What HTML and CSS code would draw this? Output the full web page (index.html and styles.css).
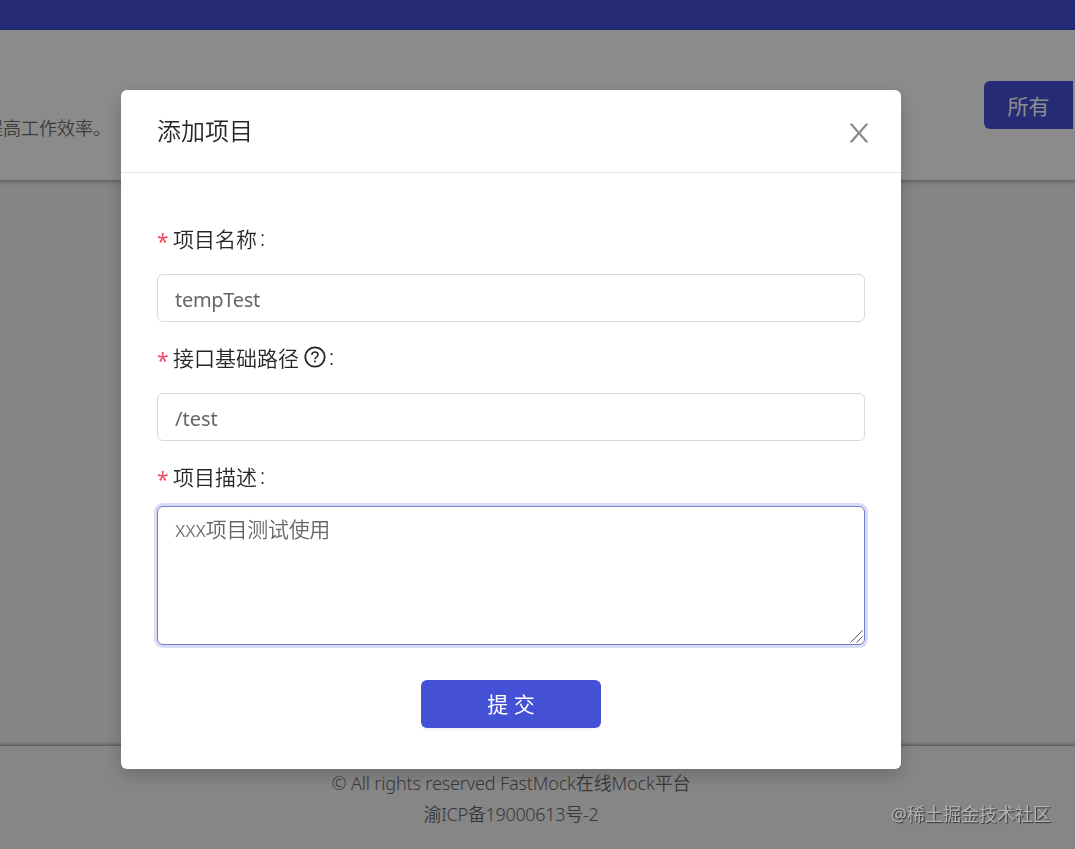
FILE: index.html
```html
<!DOCTYPE html>
<html lang="zh-CN">
<head>
  <meta charset="UTF-8">
  <title>FastMock在线Mock平台</title>
  <link rel="stylesheet" href="styles.css">
</head>
<body>

<div class="page">
  <header class="navbar"></header>

  <section class="banner">
    <p class="slogan">提高工作效率。</p>
    <button class="btn filter-btn">所有</button>
  </section>

  <main class="content"></main>

  <footer class="footer">
    <p><span class="copyright">© All rights reserved FastMock在线Mock平台</span></p>
    <p><span class="icp">渝ICP备19000613号-2</span></p>
  </footer>
</div>

<!-- Add project dialog -->
<div class="mask">
  <div class="modal">
    <div class="modal-header">
      <h2>添加项目</h2>
      <svg class="close" width="20" height="20" viewBox="0 0 20 20">
        <path d="M1 1H3.2L10 8.9L16.8 1H19L11.1 10L19 19H16.8L10 11.2L3.2 19H1L8.9 10Z" fill="currentColor" stroke="currentColor" stroke-width="0.7"/>
      </svg>
    </div>
    <form class="modal-body">
      <label class="label" for="name"><span class="required">*</span>项目名称<span class="colon">:</span></label>
      <input class="control" id="name" type="text" value="tempTest">

      <label class="label" for="path"><span class="required">*</span>接口基础路径
        <svg class="help" width="22" height="22" viewBox="0 0 22 22" fill="none" stroke="currentColor">
          <circle cx="11" cy="11" r="9.7" stroke-width="1.8"/>
          <path d="M7.9 8.9C7.9 7 9.2 5.9 11 5.9S14.1 7.1 14.1 8.7C14.1 10.8 11 10.9 11 13.2" stroke-width="1.5"/>
          <circle cx="11" cy="15.6" r="1" fill="currentColor" stroke="none"/>
        </svg><span class="colon">:</span></label>
      <input class="control" id="path" type="text" value="/test">

      <label class="label label-desc" for="desc"><span class="required">*</span>项目描述<span class="colon">:</span></label>
      <div class="textarea-wrap">
        <textarea class="control focused" id="desc">xxx项目测试使用</textarea>
        <svg class="resizer" width="13" height="13" viewBox="0 0 13 13">
          <path d="M0.5 12.5L12.5 0.5M6.5 12.5L12.5 6.5" stroke="#555" fill="none"/>
        </svg>
      </div>

      <button class="btn submit-btn" type="button">提 交</button>
    </form>
  </div>
</div>

<div class="watermark">@稀土掘金技术社区</div>

</body>
</html>
```
FILE: styles.css
```css
* {
  box-sizing: border-box;
}
body {
  margin: 0;
  font-family: "Noto Sans", "Noto Sans CJK SC", sans-serif;
  font-weight: 350;
  font-size: 21px;
  color: #262626;
  overflow: hidden;
}
h2, p {
  margin: 0;
  font-weight: 350;
}
.page {
  display: flex;
  flex-direction: column;
  height: 849px;
  background: #f2f2f2;
}
.navbar {
  height: 30px;
  background: #4450d6;
}
.banner {
  display: flex;
  justify-content: space-between;
  height: 150px;
  margin: 0 -10px 1px;
  padding: 51px 12px 0 10px;
  background: #fdfdfd;
  box-shadow: 0 1px 5px rgba(0, 0, 0, 0.4);
}
.slogan {
  margin: 34px 0 0 -15px;
  font-size: 18px;
  line-height: 26px;
  color: #707070;
}
.btn {
  border: none;
  background: #4450d6;
  color: #fff;
  font-family: inherit;
  font-weight: 400;
  font-size: 21px;
  line-height: 48px;
  height: 48px;
  padding: 0;
}
.filter-btn {
  width: 89px;
  padding-top: 1px;
  border-radius: 6px 0 0 6px;
}
.content {
  flex: 1;
}
.footer {
  height: 103px;
  margin: 0 -10px;
  padding: 22px 10px 0;
  background: #f4f4f4;
  box-shadow: 0 -1px 4px rgba(0, 0, 0, 0.45);
  font-size: 18px;
  line-height: 31px;
  color: #686868;
  text-align: center;
}
.footer p {
  width: 1022px;
}
.copyright {
  letter-spacing: -0.15px;
}
.icp {
  letter-spacing: -0.3px;
}

.mask {
  position: fixed;
  inset: 0;
  padding: 90px 0 0 121px;
  background: rgba(0, 0, 0, 0.45);
}
.modal {
  width: 780px;
  height: 679px;
  background: #fff;
  border-radius: 6px;
  box-shadow: 0 6px 18px rgba(0, 0, 0, 0.2);
}
.modal-header {
  display: flex;
  align-items: center;
  justify-content: space-between;
  height: 83px;
  padding: 0 32px 0 36px;
  border-bottom: 1px solid #e8e8e8;
}
.modal-header h2 {
  font-size: 24px;
  line-height: 36px;
}
.close {
  margin-top: 3px;
  color: #858585;
}
.modal-body {
  display: flex;
  flex-direction: column;
  padding: 36px;
}
.label {
  display: flex;
  align-items: center;
  height: 65px;
  padding-bottom: 7px;
}
.label-desc {
  height: 59px;
  padding-bottom: 2px;
}
.required {
  width: 16px;
  margin-top: 6px;
  color: #ee4a60;
  font-weight: 400;
}
.help {
  margin: 0 0 0 5px;
}
.colon {
  margin-left: 3px;
}
.control {
  display: block;
  width: 100%;
  height: 48px;
  margin-bottom: 6px;
  padding: 3px 17px 0;
  border: 1px solid #d9d9d9;
  border-radius: 6px;
  background: #fff;
  color: #666;
  font: inherit;
  font-size: 20px;
  font-weight: 400;
  letter-spacing: -0.3px;
  outline: none;
}
#path {
  letter-spacing: 0;
}
.textarea-wrap {
  position: relative;
}
textarea.control {
  height: 139px;
  margin: 0;
  padding: 6px 17px;
  font-size: 21px;
  font-weight: 350;
  line-height: 32px;
  resize: none;
}
.control.focused {
  border-color: #747ccd;
  box-shadow: 0 0 0 3px #d9dcf7;
}
.resizer {
  position: absolute;
  right: 2px;
  bottom: 2px;
}
.submit-btn {
  align-self: center;
  width: 180px;
  margin-top: 35px;
  border-radius: 6px;
  box-shadow: 0 3px 0 rgba(0, 0, 0, 0.03);
}

.watermark {
  position: fixed;
  right: 24px;
  bottom: 21px;
  font-size: 18px;
  line-height: 28px;
  font-weight: 400;
  color: #b4b4b4;
  text-shadow: 1px 1px 1px #333;
}
```
